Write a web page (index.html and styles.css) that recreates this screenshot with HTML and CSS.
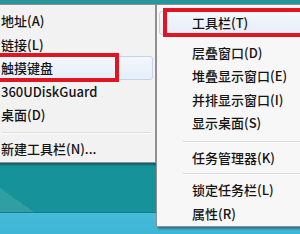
FILE: index.html
```html
<!DOCTYPE html>
<html lang="zh-CN">
<head>
<meta charset="utf-8">
<title>任务栏菜单</title>
<link rel="stylesheet" href="styles.css">
</head>
<body>
<div class="desktop">
  <div class="menu menu-left">
    <div class="item">地址(A)</div>
    <div class="item">链接(L)</div>
    <div class="item active">触摸键盘</div>
    <div class="item">360UDiskGuard</div>
    <div class="item">桌面(D)</div>
    <div class="sep"></div>
    <div class="item">新建工具栏(N)...</div>
  </div>
  <div class="mark mark-left"></div>

  <div class="menu menu-right">
    <div class="item active">工具栏(T)</div>
    <div class="sep sep-small"></div>
    <div class="item">层叠窗口(D)</div>
    <div class="item">堆叠显示窗口(E)</div>
    <div class="item">并排显示窗口(I)</div>
    <div class="item">显示桌面(S)</div>
    <div class="sep sep-big"></div>
    <div class="item">任务管理器(K)</div>
    <div class="sep"></div>
    <div class="item">锁定任务栏(L)</div>
    <div class="item">属性(R)</div>
  </div>
  <div class="mark mark-right"></div>
</div>
</body>
</html>
```
FILE: styles.css
```css
html, body {
  margin: 0;
  padding: 0;
}

body {
  width: 300px;
  height: 234px;
  overflow: hidden;
  background: #17939a;
}

.desktop {
  position: relative;
  width: 300px;
  height: 234px;
  overflow: hidden;
  background:
    linear-gradient(to bottom, transparent 212px, #1a7d86 212px, #1a7d86 213px, #45bad9 213px, #3fb6d6 234px),
    linear-gradient(to bottom left, transparent 50%, #2f9fa3 50%) 0 188px / 34px 24px no-repeat,
    linear-gradient(to bottom, #27979d 0, #27979d 4px, #16929a 4px);
}

.menu {
  position: absolute;
  box-sizing: border-box;
  border: 1px solid #8f8f8f;
  font-family: "Noto Sans CJK SC", "Microsoft YaHei", sans-serif;
  font-size: 13px;
  font-weight: 500;
  color: #141414;
  box-shadow: 2px 2px 2px rgba(0, 0, 0, 0.35);
}

.menu-left {
  left: -30px;
  top: 4px;
  width: 186px;
  height: 159px;
  padding: 4px 2px 1px;
  background: #f2f2f2;
}

.menu-left .item {
  padding-left: 28px;
}

.menu-left .sep {
  height: 10.5px;
  margin: 0 2px 0 29px;
  background: linear-gradient(to bottom, transparent 5px, #dcdcdc 5px, #dcdcdc 6px, #ffffff 6px, #ffffff 7px, transparent 7px);
}

.menu-right {
  left: 156px;
  top: 4px;
  width: 170px;
  height: 223px;
  padding: 6px 2px 0;
  background: #f7f7f7;
}

.menu-right .item {
  padding-left: 33px;
}

.menu-right .sep {
  height: 9px;
  margin-left: 24px;
  background: linear-gradient(to bottom, transparent 4px, #dadada 4px, #dadada 5px, #ffffff 5px, #ffffff 6px, transparent 6px);
}

.menu-right .sep-small {
  height: 6px;
  background: none;
}

.menu-right .sep-big {
  height: 11px;
  background: linear-gradient(to bottom, transparent 6px, #dadada 6px, #dadada 7px, #ffffff 7px, #ffffff 8px, transparent 8px);
}

.item {
  box-sizing: border-box;
  height: 23.5px;
  line-height: 23.5px;
  white-space: nowrap;
}

.item.active {
  border: 1px solid #c2d4ec;
  border-radius: 3px;
  background: linear-gradient(to bottom, #f4f7fc, #e6eef9);
  line-height: 21.5px;
}

.menu-left .item.active {
  padding-left: 27px;
}

.menu-right .item.active {
  padding-left: 32px;
}

.mark {
  position: absolute;
  box-sizing: border-box;
  border: 4px solid #e2141f;
}

.mark-left {
  left: -10px;
  top: 53px;
  width: 129px;
  height: 29px;
}

.mark-right {
  left: 163px;
  top: 8px;
  width: 150px;
  height: 29px;
}
```
